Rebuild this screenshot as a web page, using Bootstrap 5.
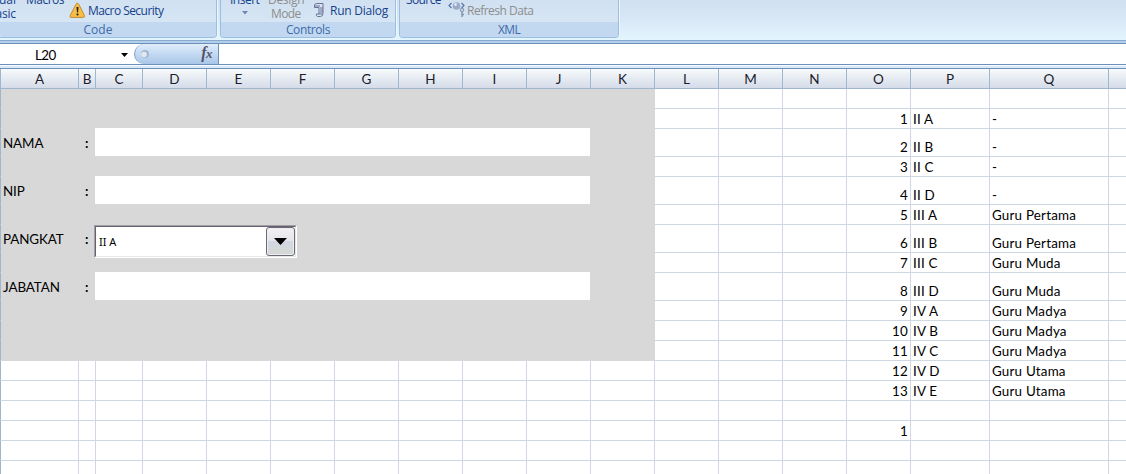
<!DOCTYPE html>
<html lang="id">
<head>
<meta charset="utf-8">
<meta name="viewport" content="width=device-width, initial-scale=1">
<title>Data Pangkat</title>
<link href="https://cdn.jsdelivr.net/npm/bootstrap@5.3.0/dist/css/bootstrap.min.css" rel="stylesheet">
<style>
body{width:1126px;height:474px;background:#fff;color:#000;font-family:Lato,"Liberation Sans",sans-serif;font-size:13.4px;line-height:16px}
.ribbon{height:40px;background:linear-gradient(#d0e0f0,#d9e8f6 50%,#e3f5ff);font-family:"Open Sans","Noto Sans",sans-serif;font-size:12px;color:#15428b;padding-bottom:2px;gap:3px}
.rgroup{height:38px;border:1px solid #9dbfdf;border-top:0;border-radius:0 0 4px 4px;background:linear-gradient(#d2e1f1,#d9e8f6);box-shadow:1px 0 0 #eef7ff}
.g-code{width:217px;border-left:0;border-bottom-left-radius:0}
.g-ctl{width:176px}.g-xml{width:220px}
.rbody{height:22px}
.rtitle{height:15px;background:#c1d8f0;color:#3e6aaa;line-height:16px;border-radius:0 0 3px 3px}
.rt{position:absolute;white-space:nowrap;line-height:13px}
.rbody svg{position:absolute}
.dim{color:#8d8d8d}
.rule-top{height:4px;background:linear-gradient(#86a9cf 0 1px,#b3cfe9 1px 3px,#6b90b9 3px)}
.fbar{height:20px}
.namebox{width:134px}
.fxbox{width:84px;border:1px solid #7d9fc6;border-width:0 0 0 1px;border-radius:10px 0 0 10px;background:linear-gradient(#e1edfb,#c6dbf3 45%,#a9c6e8)}
.finput{border-left:1px solid #6b90b9}
.rule-bot{height:5px;background:linear-gradient(#6b90b9 0 1px,#f6faff 1px 2px,#dce9f8 2px 4px,#6b90b9 4px)}
.sheet{width:1126px;table-layout:fixed;border-collapse:separate;border-spacing:0}
.sheet td,.sheet th{padding:0 2px;border-right:1px solid #d0d7e5;border-bottom:1px solid #d0d7e5;overflow:hidden;white-space:nowrap;vertical-align:bottom;line-height:17px;height:20px}
.sheet td{letter-spacing:.2px}
.sheet th{background:linear-gradient(#f8fbfb,#e6ebf2 50%,#d5dce9);border-color:#9eb6ce;font-weight:400;text-align:center;vertical-align:middle;color:#1c1c2c;font-size:13.5px;line-height:18px}
.sheet tr>:first-child{padding:0;border-right-color:#9eb6ce}
.sheet tr>:last-child{border-right:0}
.sheet tr.tall td{height:28px}
.sheet tr.cut td{height:13px;border-bottom:0}
.sheet td.fill{background:#d8d8d8;border-color:#d8d8d8;vertical-align:middle;padding-top:2px;letter-spacing:-.1px}
.sheet td.colon{padding-left:6px;font-weight:700}
.sheet td.entry{background:#fff;padding:0;box-shadow:-1px -1px 0 #fff}
.combo{left:94px;top:225px;width:203px;height:33px;background:#fff;border:1px solid;border-color:#a0a0a0 #fff #fff #a0a0a0;font-size:11px;font-family:"Noto Sans","Open Sans",sans-serif}
.combo-in{border:1px solid;border-color:#696075 #e8e8e8 #e8e8e8 #696075}
.combo-btn{width:29px;background:linear-gradient(#f1f1f4,#e5e6eb 46%,#d2d7e1 50%,#d4d9d3);border:1px solid #6c6878;border-radius:3px;box-shadow:inset 0 0 0 1px #eee}
</style>
</head>
<body class="overflow-hidden position-relative">
<header class="ribbon d-flex">
  <section class="rgroup g-code">
    <div class="rbody position-relative">
      <span class="rt" style="left:-17px;top:-7px">Visual</span><span class="rt" style="left:26px;top:-7px;letter-spacing:-.5px">Macros</span><span class="rt" style="left:-12px;top:7px;letter-spacing:-.2px">Basic</span>
      <svg style="left:69px;top:2px" width="17" height="17" viewBox="0 0 17 17"><path d="M8 1.2 Q9 1 9.7 2.2L15.5 13.5Q16 15.3 14.3 15.4H2Q.4 15.3 1.2 13.5L7 2.2Q7.4 1.3 8 1.2Z" fill="#f8bd43" stroke="#c28a35"/><path d="M7.5 5h2l-.4 5.5H8z" fill="#222"/><circle cx="8.5" cy="12.5" r="1.1" fill="#222"/></svg>
      <span class="rt" style="left:88px;top:4px;letter-spacing:-.55px">Macro Security</span>
    </div>
    <div class="rtitle text-center"><span style="margin-left:-20px">Code</span></div>
  </section>
  <section class="rgroup g-ctl">
    <div class="rbody position-relative">
      <span class="rt" style="left:9px;top:-7px;letter-spacing:-.5px">Insert</span>
      <svg style="left:21px;top:11px" width="6" height="4"><path d="M0 0h6L3 3.500z" fill="#6d87b5"/></svg>
      <span class="rt dim" style="left:47px;top:-7px;letter-spacing:-.3px">Design</span><span class="rt dim" style="left:50px;top:7px;letter-spacing:-.6px">Mode</span>
      <svg style="left:92px;top:2px" width="13" height="16" viewBox="0 0 13 16"><path d="M1.500 5.500V3Q2 1.500 4 1.500H10V11Q10 14.500 7.500 14.500H4.500Q3 14 3.500 12H6V5.500Z" fill="#dce2ef" stroke="#66729a"/><path d="M2 4h5M7 6h3M7 8h3M7 10h3M6 12h3" stroke="#66729a"/></svg>
      <span class="rt" style="left:109px;top:4px;letter-spacing:-.25px">Run Dialog</span>
    </div>
    <div class="rtitle text-center" style="letter-spacing:-.4px">Controls</div>
  </section>
  <section class="rgroup g-xml">
    <div class="rbody position-relative">
      <span class="rt" style="left:6px;top:-7px;letter-spacing:-.6px">Source</span>
      <svg style="left:48px;top:0" width="18" height="18" viewBox="0 0 18 18"><path d="M3.500 3L1 5.500l2.500 2.500M13.500 3L16 5.500l-2.500 2.500" fill="none" stroke="#5577ad" stroke-width="1.200"/><circle cx="8.500" cy="6" r="3.800" fill="#9aabc6"/><circle cx="7.500" cy="4.500" r="1.400" fill="#dfe8f4"/><circle cx="14" cy="10" r="1.800" fill="#c8d3e5" stroke="#8291b0"/><path d="M14 12v5M14 14.500h2" stroke="#8291b0" stroke-width="1.400"/></svg>
      <span class="rt dim" style="left:67px;top:4px;letter-spacing:-.5px">Refresh Data</span>
    </div>
    <div class="rtitle text-center" style="letter-spacing:-.6px">XML</div>
  </section>
</header>
<div class="rule-top"></div>
<div class="fbar d-flex">
  <div class="namebox d-flex align-items-center position-relative"><span style="margin-left:35px;margin-top:2px;letter-spacing:-.6px">L20</span><svg class="position-absolute" style="left:121px;top:9px" width="7" height="4"><path d="M0 0h7L3.500 4z"/></svg></div>
  <div class="fxbox d-flex align-items-center justify-content-between">
    <svg style="margin-left:5px" width="10" height="10"><circle cx="5" cy="5" r="4" fill="#a5b8d0"/><circle cx="4" cy="5.500" r="2.800" fill="#e2e8ef"/></svg>
    <span class="fst-italic fw-bold" style="font-family:'Liberation Serif',serif;font-size:16px;color:#555566;margin-right:6px;margin-top:-1px;letter-spacing:-.5px">f<span style="font-size:13px">x</span></span>
  </div>
  <div class="finput flex-fill"></div>
</div>
<div class="rule-bot"></div>
<table class="sheet"><colgroup id="cols"></colgroup><thead id="head"></thead><tbody id="rows"></tbody></table>
<div class="combo position-absolute d-flex">
  <div class="combo-in d-flex flex-fill"><span class="flex-fill align-self-center" style="padding-left:3px;padding-top:1px">II A</span><div class="combo-btn d-flex align-items-center justify-content-center"><svg width="13" height="7"><path d="M0 0h13L6.500 7z"/></svg></div></div>
</div>
<script>
const widths=[1,78,17,47,64,64,64,64,64,64,64,64,64,64,64,64,79,119,17];
document.getElementById('cols').innerHTML=widths.map(w=>`<col style="width:${w}px">`).join('');
document.getElementById('head').innerHTML='<tr><th></th>'+[...'ABCDEFGHIJKLMNOPQ'].map(c=>`<th>${c}</th>`).join('')+'<th></th></tr>';
const ranks=['','II A','II B','II C','II D','III A','III B','III C','III D','IV A','IV B','IV C','IV D','IV E'];
const posts=['','-','-','-','-','Guru Pertama','Guru Pertama','Guru Muda','Guru Muda','Guru Madya','Guru Madya','Guru Madya','Guru Utama','Guru Utama'];
const labels={2:'NAMA',4:'NIP',6:'PANGKAT',8:'JABATAN'};
const lastRow=17, selectedRow=15;
let html='';
for(let r=0;r<=lastRow;r++){
  const label=labels[r],entry=label&&r!==6;
  html+=`<tr class="${label?'tall':r===lastRow?'cut':''}"><td></td>`;
  if(r<12){
    if(label){
      html+=`<td class="fill">${label}</td><td class="fill colon">:</td>`;
      html+=entry?'<td class="fill entry" colspan="8"></td><td class="fill"></td>':'<td class="fill" colspan="9"></td>';
    }else html+='<td class="fill" colspan="11"></td>';
  }else html+='<td></td>'.repeat(11);
  html+='<td></td>'.repeat(3)+`<td class="text-end">${r===selectedRow?1:(ranks[r]?r:'')}</td><td>${ranks[r]||''}</td><td>${posts[r]||''}</td><td></td></tr>`;
}
document.getElementById('rows').innerHTML=html;
</script>
<script src="https://cdn.jsdelivr.net/npm/bootstrap@5.3.0/dist/js/bootstrap.bundle.min.js"></script>
</body>
</html>
